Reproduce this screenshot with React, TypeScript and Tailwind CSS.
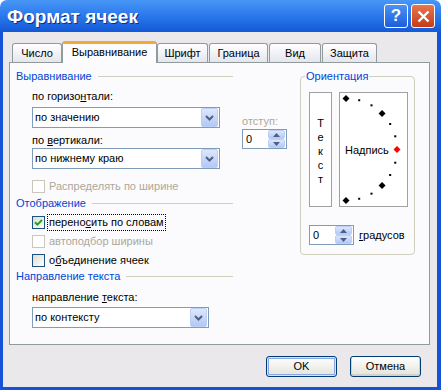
import React from "react";

// Формат ячеек — XP style dialog

type CheckProps = { checked?: boolean; disabled?: boolean };

function Checkbox({ checked, disabled }: CheckProps) {
    return (
        <div
            className={`flex h-[13px] w-[13px] shrink-0 items-center justify-center border ${
                disabled
                    ? "border-[#cac8bb] bg-white"
                    : "border-[#1c5180] bg-gradient-to-br from-[#dcdcd7] to-white"
            }`}
        >
            {checked && (
                <svg width="9" height="9" viewBox="0 0 9 9">
                    <path d="M1 4.2 L3.4 6.6 L8 2" fill="none" stroke="#21a121" strokeWidth="2" />
                </svg>
            )}
        </div>
    );
}

function Combo({ value, width }: { value: string; width: string }) {
    return (
        <div className={`flex h-[21px] items-center border border-[#7f9db9] bg-white ${width}`}>
            <span className="flex-1 pl-[2px] leading-[13px]">{value}</span>
            <div className="mr-px flex h-[19px] w-[17px] items-center justify-center rounded-[2px] border border-[#bccff7] bg-gradient-to-b from-[#dde7fd] to-[#b4c8f5]">
                <svg width="9" height="6" viewBox="0 0 9 6">
                    <path d="M1 1 L4.5 4.5 L8 1" fill="none" stroke="#4d6185" strokeWidth="2" />
                </svg>
            </div>
        </div>
    );
}

function Spin() {
    return (
        <div className="flex h-[20px] w-[45px] items-center border border-[#7f9db9] bg-white">
            <span className="flex-1 pl-[3px] leading-[13px]">0</span>
            <div className="mr-px flex h-[18px] w-[17px] flex-col">
                <div className="flex flex-1 items-center justify-center rounded-[2px] border border-[#bccff7] bg-gradient-to-b from-[#dde7fd] to-[#b4c8f5]">
                    <svg width="7" height="4" viewBox="0 0 7 4">
                        <path d="M0 4 L3.5 0 L7 4 Z" fill="#4d6185" />
                    </svg>
                </div>
                <div className="flex flex-1 items-center justify-center rounded-[2px] border border-[#bccff7] bg-gradient-to-b from-[#dde7fd] to-[#b4c8f5]">
                    <svg width="7" height="4" viewBox="0 0 7 4">
                        <path d="M0 0 L3.5 4 L7 0 Z" fill="#4d6185" />
                    </svg>
                </div>
            </div>
        </div>
    );
}

function GroupHeader({ title }: { title: string }) {
    return (
        <div className="flex h-[13px] w-[217px] items-center">
            <span className="leading-[13px] text-[#0046d5]">{title}</span>
            <div className="ml-[6px] h-px flex-1 bg-[#d0d0bf]" />
        </div>
    );
}

function Arc() {
    // dots of the orientation half circle
    const cx = 6;
    const cy = 56.5;
    const r = 51;
    const items = [];
    for (let a = -90; a <= 90; a += 15) {
        const rad = (a * Math.PI) / 180;
        const x = cx + r * Math.cos(rad);
        const y = cy - r * Math.sin(rad);
        if (a % 45 === 0) {
            const fill = a === 0 ? "#ff0000" : "#000000";
            items.push(
                <polygon
                    key={a}
                    points={`${x},${y - 3.5} ${x + 3.5},${y} ${x},${y + 3.5} ${x - 3.5},${y}`}
                    fill={fill}
                />
            );
        } else {
            items.push(<rect key={a} x={x - 1} y={y - 1} width="2" height="2" fill="#000" />);
        }
    }
    return (
        <svg className="absolute inset-0" width="67" height="113" viewBox="0 0 67 113">
            {items}
        </svg>
    );
}

const tabs = [
    { label: "Число", w: "w-[50px]", gap: "" },
    { label: "Выравнивание", w: "w-[95px]", gap: "", active: true },
    { label: "Шрифт", w: "w-[51px]", gap: "" },
    { label: "Граница", w: "w-[59px]", gap: "ml-px" },
    { label: "Вид", w: "w-[52px]", gap: "ml-px" },
    { label: "Защита", w: "w-[55px]", gap: "ml-px" },
];

export default function App() {
    return (
        <div className="flex h-[390px] w-[441px] flex-col font-['Liberation_Sans',Arial,sans-serif] text-[11px] text-black">
            {/* title bar */}
            <div className="flex h-[32px] shrink-0 items-center rounded-t-[7px] bg-gradient-to-b from-[#4896f5] via-[#2a78ec] to-[#1458d8] pl-[7px] pr-[6px]">
                <span className="flex-1 pt-[2px] text-[19px] font-bold leading-[24px] text-white [text-shadow:1px_1px_0_#0b2f8f]">
                    Формат ячеек
                </span>
                <div className="flex h-[24px] w-[24px] items-center justify-center rounded-[3px] border border-white bg-gradient-to-b from-[#4b92f5] to-[#1c5ddb] text-[17px] font-bold text-white">
                    ?
                </div>
                <div className="ml-[3px] flex h-[24px] w-[24px] items-center justify-center rounded-[3px] border border-white bg-gradient-to-b from-[#e9754e] to-[#c43a17]">
                    <svg width="13" height="13" viewBox="0 0 13 13">
                        <path d="M1.5 1.5 L11.5 11.5 M11.5 1.5 L1.5 11.5" stroke="#fff" strokeWidth="2.4" />
                    </svg>
                </div>
            </div>

            {/* body */}
            <div className="flex flex-1 flex-col border-b-[3px] border-l-[3px] border-r-4 border-[#1552d9] bg-[#ebe8eb]">
                {/* tabs */}
                <div className="ml-[9px] mt-[9px] flex h-[21px] items-end">
                    {tabs.map((t) =>
                        t.active ? (
                            <div
                                key={t.label}
                                className={`relative z-10 -mb-px flex h-[22px] items-center justify-center rounded-t-[3px] border-x border-t-[3px] border-x-[#919b9c] border-t-[#f4a83a] bg-[#fcfcfe] pb-[2px] ${t.w}`}
                            >
                                {t.label}
                            </div>
                        ) : (
                            <div
                                key={t.label}
                                className={`flex h-[19px] items-center justify-center rounded-t-[3px] border-x border-t border-[#919b9c] bg-gradient-to-b from-white to-[#e4e6ee] ${t.w} ${t.gap}`}
                            >
                                {t.label}
                            </div>
                        )
                    )}
                </div>

                {/* panel */}
                <div className="ml-[6px] mr-[7px] flex h-[283px] border border-[#919b9c] bg-[#fbfbfd]">
                    {/* left column */}
                    <div className="flex w-[290px] flex-col pl-[6px] pt-[7px]">
                        <GroupHeader title="Выравнивание" />
                        <div className="mt-[7px] flex pl-[16px]">
                            <div className="flex flex-col">
                                <div className="leading-[13px]">
                                    по горизо<u>н</u>тали:
                                </div>
                                <div className="mt-[4px]">
                                    <Combo value="по значению" width="w-[188px]" />
                                </div>
                                <div className="mt-[6px] leading-[13px]">
                                    по <u>в</u>ертикали:
                                </div>
                                <div className="mt-px">
                                    <Combo value="по нижнему краю" width="w-[188px]" />
                                </div>
                            </div>
                            <div className="ml-[22px] flex flex-col pt-[25px]">
                                <div className="leading-[13px] text-[#aca899]">отступ:</div>
                                <div className="mt-px">
                                    <Spin />
                                </div>
                            </div>
                        </div>
                        <div className="ml-[16px] mt-[11px] flex h-[13px] items-center gap-[4px]">
                            <Checkbox disabled />
                            <span className="leading-[13px] text-[#aca899]">Распределять по ширине</span>
                        </div>

                        <div className="mt-[4px]">
                            <GroupHeader title="Отображение" />
                        </div>
                        <div className="ml-[16px] mt-[6px] flex h-[13px] items-center">
                            <Checkbox checked />
                            <span className="-my-[2px] ml-[2px] border border-dotted border-black px-px py-px leading-[13px]">
                                перено<u>с</u>ить по словам
                            </span>
                        </div>
                        <div className="ml-[16px] mt-[6px] flex h-[13px] items-center gap-[4px]">
                            <Checkbox disabled />
                            <span className="leading-[13px] text-[#aca899]">автоподбор ширины</span>
                        </div>
                        <div className="ml-[16px] mt-[6px] flex h-[13px] items-center gap-[4px]">
                            <Checkbox />
                            <span className="leading-[13px]">
                                о<u>б</u>ъединение ячеек
                            </span>
                        </div>

                        <div className="mt-[3px]">
                            <GroupHeader title="Направление текста" />
                        </div>
                        <div className="ml-[16px] mt-[8px] leading-[13px]">
                            направление <u>т</u>екста:
                        </div>
                        <div className="ml-[16px] mt-[3px]">
                            <Combo value="по контексту" width="w-[177px]" />
                        </div>
                    </div>

                    {/* orientation */}
                    <div className="mt-[13px] flex h-[179px] w-[115px] flex-col rounded-[4px] border border-[#d0d0bf]">
                        <span className="-mt-[7px] ml-[4px] w-fit bg-[#fbfbfd] px-px leading-[13px] text-[#0046d5]">
                            Ориентация
                        </span>
                        <div className="ml-[8px] mt-[9px] flex gap-[7px]">
                            <div className="flex h-[115px] w-[23px] flex-col items-center justify-center border border-[#a0a0a0] bg-white pt-[2px] leading-[14px]">
                                <span>Т</span>
                                <span>е</span>
                                <span>к</span>
                                <span>с</span>
                                <span>т</span>
                            </div>
                            <div className="relative flex h-[115px] w-[69px] items-center border border-[#a0a0a0] bg-white pl-[5px] pt-[2px]">
                                <Arc />
                                <span className="relative leading-[13px]">Надпись</span>
                            </div>
                        </div>
                        <div className="ml-[8px] mt-[18px] flex items-center gap-[5px]">
                            <Spin />
                            <span className="leading-[13px]">
                                <u>г</u>радусов
                            </span>
                        </div>
                    </div>
                </div>

                {/* buttons */}
                <div className="mr-[16px] mt-[11px] flex justify-end gap-[13px]">
                    <button className="h-[21px] w-[71px] rounded-[3px] border border-[#003c74] bg-gradient-to-b from-white to-[#e3e3db] leading-[13px] shadow-[inset_0_0_0_1px_#cee7ff,inset_0_0_0_2px_#8aa5e8]">
                        OK
                    </button>
                    <button className="h-[21px] w-[71px] rounded-[3px] border border-[#003c74] bg-gradient-to-b from-white to-[#e3e3db] leading-[13px] shadow-[inset_0_-1px_0_1px_#d6d0c5]">
                        Отмена
                    </button>
                </div>
            </div>
        </div>
    );
}
